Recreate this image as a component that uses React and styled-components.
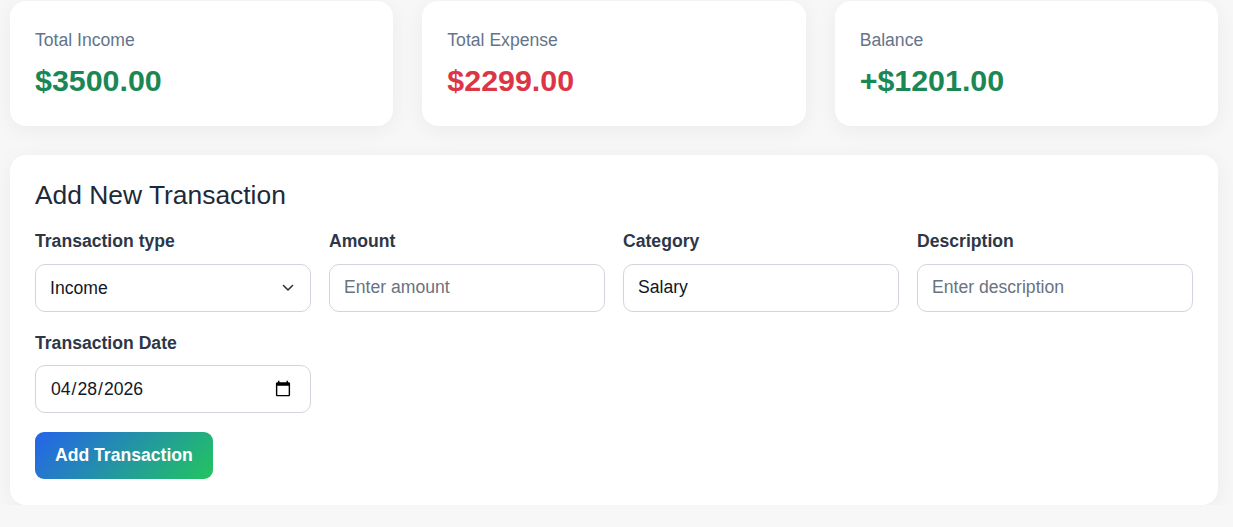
import React from "react";
import styled, { createGlobalStyle } from "styled-components";

const GlobalStyle = createGlobalStyle`
  * {
    box-sizing: border-box;
  }

  body {
    margin: 0;
    background-color: #f7f7f7;
    font-family: "Liberation Sans", Arial, sans-serif;
  }
`;

const StatCard = ({ label, value, tone }) => {
  return (
    <Card>
      <StatLabel>{label}</StatLabel>
      <StatValue $tone={tone}>{value}</StatValue>
    </Card>
  );
};

const ChevronIcon = () => (
  <svg width="12" height="8" viewBox="0 0 12 8" fill="none">
    <path
      d="M1.5 1.5L6 6L10.5 1.5"
      stroke="#333"
      strokeWidth="1.6"
      strokeLinecap="round"
      strokeLinejoin="round"
    />
  </svg>
);

const App = () => {
  const stats = [
    { label: "Total Income", value: "$3500.00", tone: "positive" },
    { label: "Total Expense", value: "$2299.00", tone: "negative" },
    { label: "Balance", value: "+$1201.00", tone: "positive" },
  ];

  return (
    <>
      <GlobalStyle />
      <Page>
        <StatsRow>
          {stats.map((stat) => (
            <StatCard key={stat.label} {...stat} />
          ))}
        </StatsRow>

        <FormCard>
          <FormTitle>Add New Transaction</FormTitle>
          <FieldGrid>
            <Field>
              <Label>Transaction type</Label>
              <SelectWrap>
                <Select defaultValue="income">
                  <option value="income">Income</option>
                  <option value="expense">Expense</option>
                </Select>
                <SelectArrow>
                  <ChevronIcon />
                </SelectArrow>
              </SelectWrap>
            </Field>
            <Field>
              <Label>Amount</Label>
              <Input type="text" placeholder="Enter amount" />
            </Field>
            <Field>
              <Label>Category</Label>
              <Input type="text" defaultValue="Salary" />
            </Field>
            <Field>
              <Label>Description</Label>
              <Input type="text" placeholder="Enter description" />
            </Field>
            <Field>
              <Label>Transaction Date</Label>
              <Input type="date" defaultValue="2026-04-28" />
            </Field>
          </FieldGrid>
          <SubmitButton type="button">Add Transaction</SubmitButton>
        </FormCard>
      </Page>
    </>
  );
};

const Page = styled.main`
  width: 1208px;
  margin-left: 10px;
  padding-top: 1px;
`;

const StatsRow = styled.section`
  display: grid;
  grid-template-columns: repeat(3, 1fr);
  gap: 29px;
`;

const Card = styled.div`
  background-color: #ffffff;
  border-radius: 16px;
  box-shadow: 0 4px 22px rgba(0, 0, 0, 0.05);
  padding: 29px 25px 28px;
`;

const StatLabel = styled.p`
  margin: 0;
  font-size: 17.6px;
  color: #64748b;
`;

const StatValue = styled.h2`
  margin: 12px 0 0;
  font-size: 30.4px;
  font-weight: 700;
  color: ${(p) => (p.$tone === "negative" ? "#dc3545" : "#1a8754")};
`;

const FormCard = styled(Card)`
  margin-top: 29px;
  padding: 25px 25px 26px;
`;

const FormTitle = styled.h3`
  margin: 0 0 20px;
  font-size: 26.4px;
  font-weight: 400;
  color: #1e293b;
`;

const FieldGrid = styled.div`
  display: grid;
  grid-template-columns: repeat(4, 1fr);
  column-gap: 18px;
  row-gap: 21px;
`;

const Field = styled.div`
  display: flex;
  flex-direction: column;
  gap: 11.5px;
`;

const Label = styled.label`
  font-size: 17.6px;
  font-weight: 700;
  color: #2d3748;
`;

const Input = styled.input`
  height: 48px;
  width: 100%;
  padding: 0 14px;
  border: 1px solid #d1d5db;
  border-radius: 10px;
  background-color: #ffffff;
  font-family: inherit;
  font-size: 17.6px;
  color: #111827;

  &::placeholder {
    color: #6b7280;
  }

  &::-webkit-calendar-picker-indicator {
    margin-right: 2px;
  }
`;

const SelectWrap = styled.div`
  position: relative;
`;

const Select = styled.select`
  appearance: none;
  height: 48px;
  width: 100%;
  padding: 0 40px 0 14px;
  border: 1px solid #d1d5db;
  border-radius: 10px;
  background-color: #ffffff;
  font-family: inherit;
  font-size: 17.6px;
  color: #111827;
`;

const SelectArrow = styled.span`
  position: absolute;
  right: 17px;
  top: 50%;
  transform: translateY(-50%);
  display: flex;
  pointer-events: none;
`;

const SubmitButton = styled.button`
  margin-top: 19px;
  height: 47px;
  padding: 0 20px;
  border: none;
  border-radius: 9px;
  background: linear-gradient(135deg, #2563eb, #22c55e);
  color: #ffffff;
  font-family: inherit;
  font-size: 17.6px;
  font-weight: 700;
  cursor: pointer;
`;

export default App;
